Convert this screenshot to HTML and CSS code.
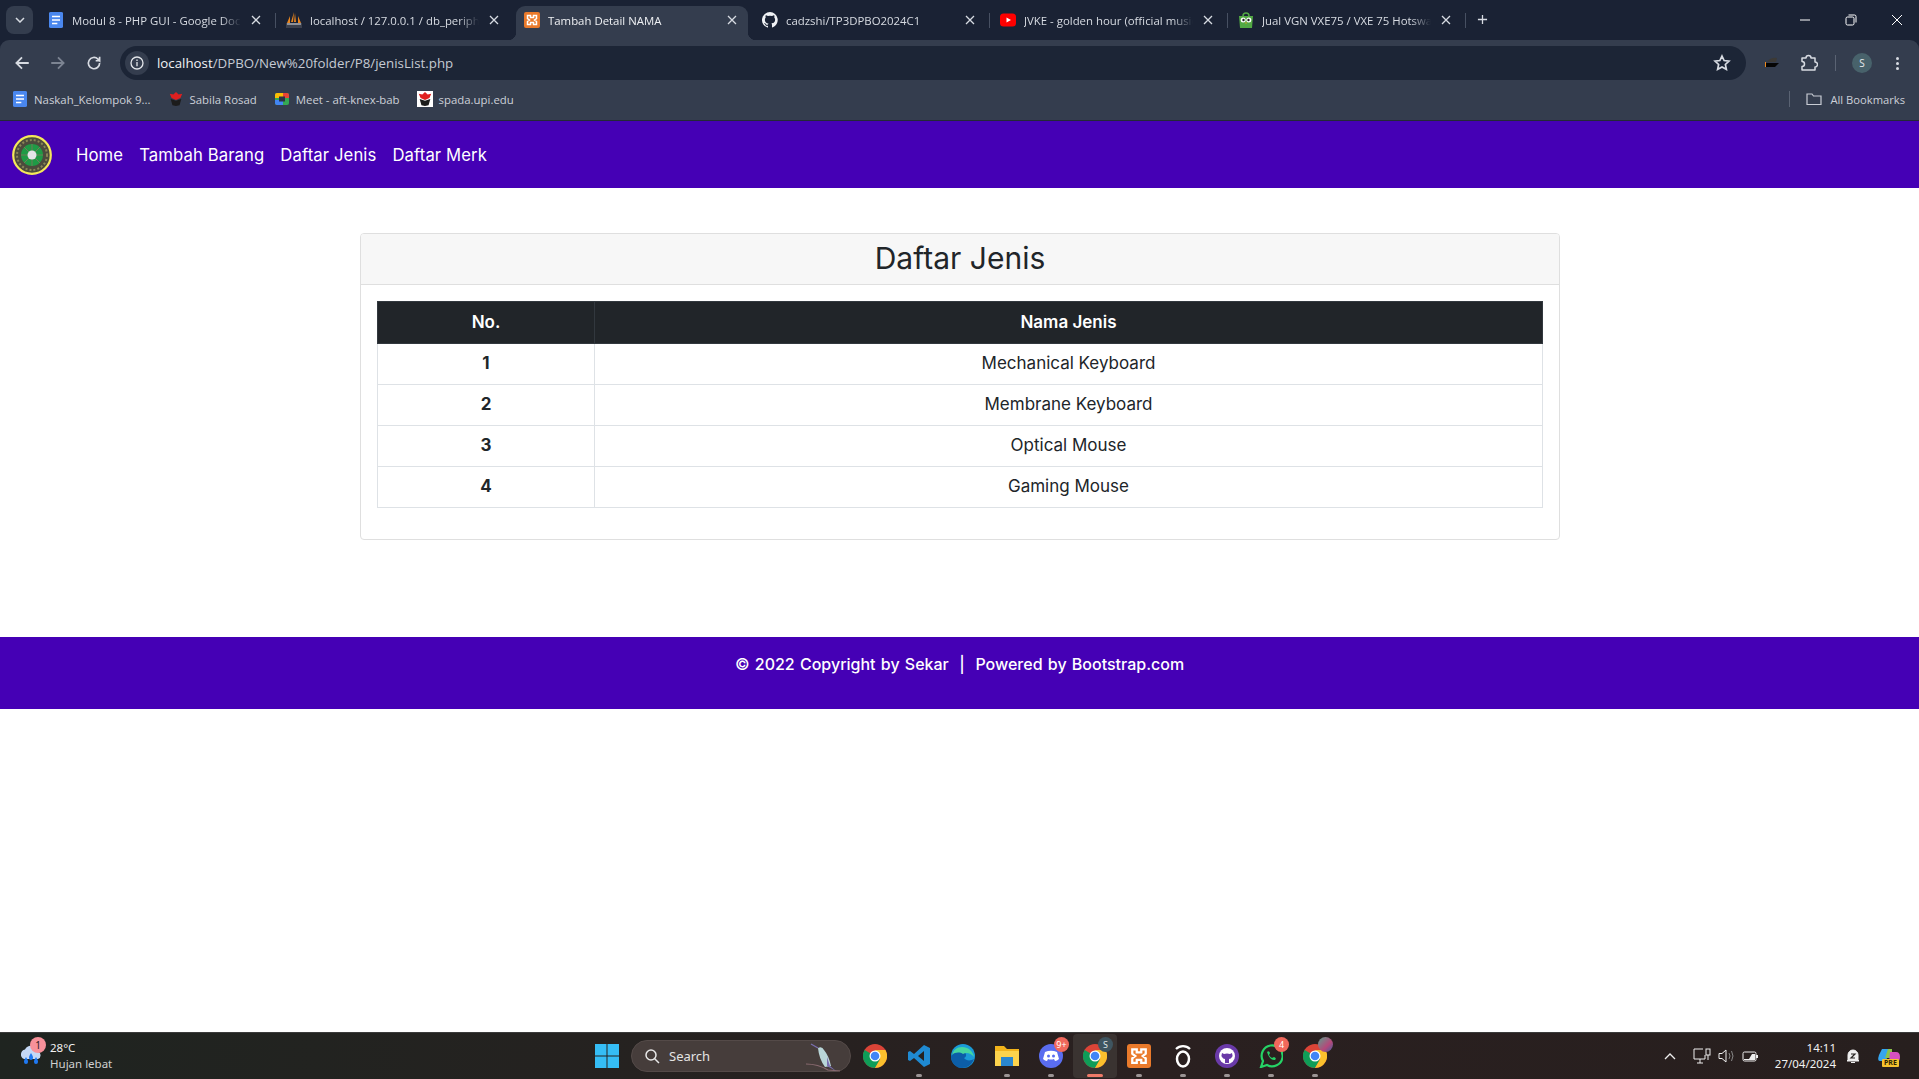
FILE: index.html
```html
<!DOCTYPE html>
<html lang="id">
<head>
<meta charset="utf-8">
<title>Tambah Detail NAMA</title>
<link rel="stylesheet" href="styles.css">
</head>
<body>
<svg class="defs" width="0" height="0" aria-hidden="true">
  <symbol id="x" viewBox="0 0 10 10"><path d="M1 1l8 8M9 1l-8 8" stroke="currentColor" stroke-width="1.3" fill="none"/></symbol>
  <symbol id="doc" viewBox="0 0 16 18"><rect width="16" height="18" rx="2" fill="#4a87ee"/><path d="M3.500 5h9M3.500 9h9M3.500 13h6" stroke="#fff" stroke-width="1.800"/></symbol>
  <symbol id="xampp" viewBox="0 0 16 16"><rect width="16" height="16" rx="2" fill="#ea7a2b"/><path d="M3.500 3.500h3v2h3v-2h3v3l-2 1.500 2 1.500v3h-3v-2h-3v2h-3v-3l2-1.500-2-1.500z" fill="none" stroke="#fff" stroke-width="1.500"/></symbol>
  <symbol id="chrome" viewBox="0 0 24 24"><circle cx="12" cy="12" r="12" fill="#db4437"/><path d="M12 12L1.600 6A12 12 0 0 0 12 24l5.200-9z" fill="#0f9d58"/><path d="M12 6h10.400A12 12 0 0 1 12 24l5.200-9z" fill="#fbc02d"/><circle cx="12" cy="12" r="5.500" fill="#fff"/><circle cx="12" cy="12" r="4.300" fill="#4285f4"/></symbol>
  <symbol id="emblem" viewBox="0 0 18 18"><path d="M9 1l3 3 4-1-2 5-5 2-5-2-2-5 4 1z" fill="#e02020"/><path d="M3 9l6 2 6-2-2 7-4 1-4-1z" fill="#1c1c1c"/></symbol>
</svg>

<header class="browser">
  <div class="tabstrip">
    <button class="tabmenu" aria-label="Search tabs"><svg width="10" height="6" viewBox="0 0 10 6"><path d="M1 1l4 4 4-4" stroke="#d7dbe2" stroke-width="1.500" fill="none"/></svg></button>
    <div class="tabs">
      <div class="tab sep"><svg class="fav" viewBox="0 0 16 18"><use href="#doc"/></svg><span class="tabtitle">Modul 8 - PHP GUI - Google Docs</span><svg class="tabx"><use href="#x"/></svg></div>
      <div class="tab"><svg class="fav" viewBox="0 0 16 16"><path d="M8 0L5 10h2zM9 1l-1 9h2zM4 4L1 11h3zM12 4l3 7h-3z" fill="#e8851f"/><path d="M0 11h16v5H0z" fill="#3a3f4c"/><path d="M1 12h14" stroke="#e3e3e3"/></svg><span class="tabtitle">localhost / 127.0.0.1 / db_periphery</span><svg class="tabx"><use href="#x"/></svg></div>
      <div class="tab active"><svg class="fav"><use href="#xampp"/></svg><span class="tabtitle">Tambah Detail NAMA</span><svg class="tabx"><use href="#x"/></svg></div>
      <div class="tab sep"><svg class="fav" viewBox="0 0 16 16"><path fill="#f0f2f5" fill-rule="evenodd" d="M8 0a8 8 0 0 0-2.500 15.600c.4.1.5-.2.500-.4v-1.400c-2.200.5-2.700-1-2.700-1-.4-.9-.9-1.200-.9-1.200-.7-.5.1-.5.1-.5.8.1 1.200.8 1.200.8.7 1.200 1.900.9 2.300.7.1-.5.3-.9.500-1.100-1.800-.2-3.600-.9-3.600-4 0-.9.3-1.600.8-2.100-.1-.2-.4-1 .1-2.100 0 0 .7-.2 2.200.8a7.600 7.600 0 0 1 4 0c1.500-1 2.200-.8 2.200-.8.4 1.100.2 1.900.1 2.100.5.6.8 1.300.8 2.100 0 3.100-1.900 3.700-3.700 3.900.3.3.6.800.6 1.500v2.200c0 .2.100.5.500.4A8 8 0 0 0 8 0z"/></svg><span class="tabtitle">cadzshi/TP3DPBO2024C1</span><svg class="tabx"><use href="#x"/></svg></div>
      <div class="tab sep"><svg class="fav" viewBox="0 0 16 16"><rect y="1.500" width="16" height="13" rx="3.500" fill="#f00"/><path d="M6.500 5.500L11 8l-4.500 2.500z" fill="#fff"/></svg><span class="tabtitle">JVKE - golden hour (official music video)</span><svg class="tabx"><use href="#x"/></svg></div>
      <div class="tab sep"><svg class="fav" viewBox="0 0 16 16"><path d="M1 4h14l-1 12H2z" fill="#52a844"/><path d="M5 4a3 3 0 0 1 6 0" fill="none" stroke="#52a844" stroke-width="1.500"/><circle cx="5.200" cy="8" r="2.500" fill="#fff"/><circle cx="10.800" cy="8" r="2.500" fill="#fff"/><circle cx="5.500" cy="8" r="1.200" fill="#222"/><circle cx="10.500" cy="8" r="1.200" fill="#222"/><path d="M7 10.500h2L8 12z" fill="#f4a31a"/></svg><span class="tabtitle">Jual VGN VXE75 / VXE 75 Hotswap</span><svg class="tabx"><use href="#x"/></svg></div>
      <svg class="newtab" viewBox="0 0 12 12"><path d="M6 1v10M1 6h10" stroke="#d7dbe2" stroke-width="1.400"/></svg>
    </div>
    <div class="winctl">
      <svg viewBox="0 0 12 12"><path d="M1 6h10" stroke="#fff"/></svg>
      <svg viewBox="0 0 12 12"><rect x="1" y="3" width="8" height="8" rx="1.500" fill="none" stroke="#fff"/><path d="M3.500 1H9.500a1.500 1.500 0 0 1 1.500 1.500V8.500" fill="none" stroke="#fff"/></svg>
      <svg viewBox="0 0 12 12"><path d="M1 1l10 10M11 1L1 11" stroke="#fff"/></svg>
    </div>
  </div>

  <div class="toolbar">
    <svg class="tool" viewBox="0 0 16 16"><path d="M14 8H3M8 3L3 8l5 5" fill="none" stroke="#d7dbe2" stroke-width="1.600"/></svg>
    <svg class="tool" viewBox="0 0 16 16"><path d="M2 8h11M8 3l5 5-5 5" fill="none" stroke="#7c8492" stroke-width="1.600"/></svg>
    <svg class="tool" viewBox="0 0 16 16"><path d="M13 8a5 5 0 1 1-1.500-3.500L13 6V2.500M13 6H9.500" fill="none" stroke="#d7dbe2" stroke-width="1.500"/></svg>
    <div class="omnibox">
      <span class="siteinfo"><svg width="14" height="14" viewBox="0 0 14 14"><circle cx="7" cy="7" r="6" fill="none" stroke="#e3e6ea" stroke-width="1.300"/><path d="M7 6v4.200M7 3.500v1.400" stroke="#e3e6ea" stroke-width="1.300"/></svg></span>
      <span class="url"><b>localhost</b>/DPBO/New%20folder/P8/jenisList.php</span>
      <svg class="star" viewBox="0 0 16 16"><path d="M8 1.800l1.900 4 4.300.5-3.200 3 .9 4.300L8 11.500l-3.900 2.100.9-4.300-3.200-3 4.300-.5z" fill="none" stroke="#d7dbe2" stroke-width="1.500"/></svg>
    </div>
    <svg class="ext1" viewBox="0 0 16 14"><path d="M3 6q4-5 10-4l-1 4z" fill="#3c3a36"/><path d="M1 6h1v5H1z" fill="#f08a1c"/><path d="M2 7h13l-4 4H2z" fill="#050505"/></svg>
    <svg class="ext2" viewBox="0 0 18 18"><path d="M2 4h4a2.500 2.500 0 0 1 5 0h4v4a2.500 2.500 0 0 1 0 5v3H2v-3.500a2.500 2.500 0 0 0 0-5z" fill="none" stroke="#d7dbe2" stroke-width="1.500" stroke-linejoin="round"/></svg>
    <span class="vsep"></span>
    <span class="avatar">S</span>
    <span class="dots"><i></i><i></i><i></i></span>
  </div>

  <nav class="bookmarks">
    <span class="bm"><svg class="bmicon" viewBox="0 0 16 18"><use href="#doc"/></svg>Naskah_Kelompok 9...</span>
    <span class="bm"><svg class="bmicon" viewBox="0 0 18 18"><use href="#emblem"/></svg>Sabila Rosad</span>
    <span class="bm"><svg class="bmicon" viewBox="0 0 16 16"><rect x="1" y="2" width="14" height="12" rx="2" fill="#34a853"/><path d="M1 4a2 2 0 0 1 2-2h6v5H1z" fill="#fbbc04"/><path d="M9 2h4a2 2 0 0 1 2 2v3H9z" fill="#ea4335"/><path d="M9 14H3a2 2 0 0 1-2-2V9h8z" fill="#4285f4"/><rect x="5" y="5.500" width="6" height="5" fill="#2b3344"/></svg>Meet - aft-knex-bab</span>
    <span class="bm"><svg class="bmicon" viewBox="0 0 18 18"><rect width="18" height="18" fill="#fff"/><use href="#emblem"/></svg>spada.upi.edu</span>
    <span class="vsep bmsep"></span>
    <span class="bm allbm"><svg class="bmicon" viewBox="0 0 16 14"><path d="M1 12.500V2h5l1.500 2h7.500v8.500z" fill="none" stroke="#c8ccd4" stroke-width="1.200"/></svg>All Bookmarks</span>
  </nav>
</header>

<div class="site">
  <nav class="topnav">
    <svg class="logo" viewBox="0 0 40 40"><circle cx="20" cy="20" r="18.800" fill="#4c4b3c" stroke="#f4e85a" stroke-width="2.200"/><circle cx="20" cy="20" r="15" fill="none" stroke="#8a8756" stroke-width="2" stroke-dasharray="2 2"/><circle cx="20" cy="20" r="11" fill="#1f9a45"/><path d="M20 9v22M9 20h22M12 12l16 16M28 12L12 28" stroke="#6f7d58" stroke-width="1"/><circle cx="20" cy="20" r="4.500" fill="#e4e4e8"/></svg>
    <a href="#">Home</a>
    <a href="#">Tambah Barang</a>
    <a href="#">Daftar Jenis</a>
    <a href="#">Daftar Merk</a>
  </nav>

  <main class="content">
    <section class="card">
      <h1 class="card-title">Daftar Jenis</h1>
      <div class="card-body">
        <table>
          <thead>
            <tr><th class="col-no">No.</th><th>Nama Jenis</th></tr>
          </thead>
          <tbody>
            <tr><th class="col-no">1</th><td>Mechanical Keyboard</td></tr>
            <tr><th class="col-no">2</th><td>Membrane Keyboard</td></tr>
            <tr><th class="col-no">3</th><td>Optical Mouse</td></tr>
            <tr><th class="col-no">4</th><td>Gaming Mouse</td></tr>
          </tbody>
        </table>
      </div>
    </section>
  </main>

  <footer class="sitefoot">© 2022 Copyright by Sekar &nbsp;|&nbsp; Powered by Bootstrap.com</footer>
</div>

<div class="taskbar">
  <div class="weather">
    <span class="wicon">
      <svg width="26" height="24" viewBox="0 0 26 24"><path d="M6 15a5 5 0 0 1 1-9.500 7 7 0 0 1 13 2 4 4 0 0 1 0 7.500z" fill="#c5d8f5"/><path d="M8 13c2 3 2 4 2 5a2 2 0 0 1-4 0c0-1 0-2 2-5zM18 13c2 3 2 4 2 5a2 2 0 0 1-4 0c0-1 0-2 2-5zM13 9c2 3 2 4 2 5a2 2 0 0 1-4 0c0-1 0-2 2-5z" fill="#1f78f0"/></svg>
      <span class="wbadge">1</span>
    </span>
    <span class="wtext"><span>28°C</span><span class="wsub">Hujan lebat</span></span>
  </div>
  <div class="apps">
    <svg class="win" viewBox="0 0 24 24"><path d="M0 0h11.500v11.500H0zM12.500 0H24v11.500H12.500zM0 12.500h11.500V24H0zM12.500 12.500H24V24H12.500z" fill="#35bdf5"/></svg>
    <div class="search">
      <svg width="16" height="16" viewBox="0 0 16 16"><circle cx="7" cy="7" r="5" fill="none" stroke="#e8e8e8" stroke-width="1.500"/><path d="M10.500 10.500L15 15" stroke="#e8e8e8" stroke-width="1.500"/></svg>
      <span class="searchtext">Search</span>
      <svg class="bird" width="38" height="30" viewBox="0 0 38 30"><path d="M2 21q12 0 22 6l12 1" fill="none" stroke="#8a6a70" stroke-width="1.200"/><path d="M14 5q4-2 6 2 5 6 7 16l-6 1q-6-8-7-19z" fill="#b9d6d8"/><path d="M23 14l3 9 6 5-9-5z" fill="#7a6fb0"/><path d="M14 5L7 1" stroke="#7a6fb0" stroke-width="1.200"/></svg>
    </div>
    <span class="app"><svg viewBox="0 0 24 24"><use href="#chrome"/></svg></span>
    <span class="app running"><svg viewBox="0 0 24 24"><path d="M17 1l6 3v16l-6 3-10-9-4 3-2-1v-8l2-1 4 3z" fill="#1f8ad2"/><path d="M17 7l-6 5 6 5z" fill="#25211f"/></svg></span>
    <span class="app"><svg viewBox="0 0 24 24"><circle cx="12" cy="12" r="12" fill="#1a9bd7"/><path d="M0 13C1 6 8 5 12 7c4 2 4 6 1 7 2 3 7 3 10 1-2 6-7 9-12 9C5 24 0 19 0 13z" fill="#0c5ea8"/><path d="M12 10c3-2 8-1 11 3-1-6-6-10-12-10-5 0-9 3-10 8 3-3 8-3 11-1z" fill="#45d6a0"/></svg></span>
    <span class="app running"><svg viewBox="0 0 24 24"><path d="M0 2h9l3 3h12v3H0z" fill="#f3b41b"/><path d="M0 7h24v15H0z" fill="#fcd34d"/><path d="M6 13h12v9H6z" fill="#2a87d0"/></svg></span>
    <span class="app running"><svg viewBox="0 0 24 24"><circle cx="12" cy="12" r="12" fill="#5a6df0"/><path d="M6 8q6-2.500 12 0l2 7q-2 2-4 2l-1-2q-3 1-6 0l-1 2q-2 0-4-2z" fill="#fff"/><circle cx="9.500" cy="12" r="1.500" fill="#5a6df0"/><circle cx="14.500" cy="12" r="1.500" fill="#5a6df0"/></svg><span class="appbadge red">9+</span></span>
    <span class="app current"><svg viewBox="0 0 24 24"><use href="#chrome"/></svg><span class="appbadge grey">S</span></span>
    <span class="app running"><svg viewBox="0 0 16 16"><use href="#xampp"/></svg></span>
    <span class="app running"><svg viewBox="0 0 24 24"><path d="M5 5a10 10 0 0 1 14 0" fill="none" stroke="#fff" stroke-width="2.200"/><ellipse cx="12" cy="15" rx="6" ry="7.500" fill="none" stroke="#fff" stroke-width="2.500"/></svg></span>
    <span class="app running"><svg viewBox="0 0 24 24"><circle cx="12" cy="12" r="12" fill="#6a3aa8"/><circle cx="12" cy="12" r="8" fill="#fff"/><path d="M7 9l2 1q3-1 6 0l2-1q1 3 0 4-1 2-3 2v4h-4v-4q-2 0-3-2-1-1 0-4z" fill="#6a3aa8"/></svg></span>
    <span class="app running"><svg viewBox="0 0 24 24"><path d="M2 23l2-6a10.500 10.500 0 1 1 4 4z" fill="none" stroke="#25d366" stroke-width="2.200"/><path d="M8 8q2-2 3 1l-1 2q1 2 3 3l2-1q3 1 1 3-5 1-8-8z" fill="#25d366"/></svg><span class="appbadge red">4</span></span>
    <span class="app running"><svg viewBox="0 0 24 24"><use href="#chrome"/></svg><span class="appbadge photo"></span></span>
  </div>
  <div class="tray">
    <svg class="chev" viewBox="0 0 12 8"><path d="M1 7l5-5 5 5" fill="none" stroke="#eee" stroke-width="1.300"/></svg>
    <svg class="net" viewBox="0 0 18 16"><path d="M10 1H1v10h11V7M4 15h6M7 11v4" fill="none" stroke="#eee"/><rect x="13" y="1" width="4" height="6" fill="none" stroke="#eee"/><path d="M15 7v5" stroke="#eee"/></svg>
    <svg class="vol" viewBox="0 0 18 16"><path d="M1 5.500h3L8 2v12l-4-3.500H1z" fill="none" stroke="#eee"/><path d="M11 5q2 3 0 6M13.500 3q3 5 0 10" fill="none" stroke="#888"/></svg>
    <svg class="bat" viewBox="0 0 18 14"><rect x="1" y="3" width="13" height="9" rx="1.500" fill="none" stroke="#eee"/><path d="M2 10h5l3-5h3v6H2z" fill="#eee"/><path d="M15 6v3" stroke="#eee" stroke-width="2"/></svg>
    <span class="clock"><span>14:11</span><span>27/04/2024</span></span>
    <svg class="bell" viewBox="0 0 16 16"><path d="M3 12V7a5 5 0 0 1 10 0v5l1 1H2zM6 14.500h4" fill="#eee" stroke="#eee"/><path d="M6 6h4l-4 4h4" fill="none" stroke="#25211f" stroke-width="1.200"/></svg>
    <span class="copilot"><svg width="24" height="18" viewBox="0 0 24 18"><path d="M5 2h8l-4 12H3Q0 14 2 8z" fill="#35a5ee"/><path d="M15 2h-4l-3 9h7z" fill="#8bc34a"/><path d="M13 5h6q4 0 4 5t-4 6h-7z" fill="#d650c0"/></svg><span class="pre">PRE</span></span>
  </div>
</div>
</body>
</html>
```

FILE: styles.css
```css
* { box-sizing: border-box; }
html, body { margin: 0; height: 100%; }
body {
  display: flex;
  flex-direction: column;
  height: 1079px;
  overflow: hidden;
  background: #fff;
  font-family: "Inter", "Noto Sans", sans-serif;
}
.defs { position: absolute; }

/* browser chrome */
.browser { background: #1a2234; color: #d7dbe2; font-family: "Open Sans", "Noto Sans", sans-serif; }
.tabstrip { display: flex; height: 40px; padding: 6px 0 0 6px; }
.tabmenu {
  flex: none; width: 27px; height: 28px; border: 0; border-radius: 8px;
  background: #343d4e; display: flex; align-items: center; justify-content: center; padding: 0;
}
.tabs { display: flex; flex: 1; margin-left: 7px; }
.tab {
  position: relative; flex: none; width: 232px; height: 34px; margin-right: 6px;
  display: flex; align-items: center; padding: 0 0 6px 8px; font-size: 11.400px;
}
.tab.sep::after {
  content: ""; position: absolute; right: -4px; top: 7px; width: 1px; height: 15px; background: #475062;
}
.tab.active { background: #343d4e; border-radius: 9px 9px 0 0; color: #eef0f3; }
.tab.active::before, .tab.active::after {
  content: ""; position: absolute; bottom: 0; width: 8px; height: 8px;
}
.tab.active::before { left: -8px; background: radial-gradient(circle at 0 0, transparent 8px, #343d4e 8.500px); }
.tab.active::after { right: -8px; background: radial-gradient(circle at 100% 0, transparent 8px, #343d4e 8.500px); }
.fav { flex: none; width: 16px; height: 16px; }
.tabtitle {
  flex: none; width: 169px; margin-left: 8px; margin-right: 3px; white-space: nowrap; overflow: hidden;
  -webkit-mask-image: linear-gradient(90deg, #000 88%, transparent);
  mask-image: linear-gradient(90deg, #000 88%, transparent);
}
.tabx { flex: none; width: 10px; height: 10px; margin-left: 7px; color: #d7dbe2; }
.newtab { flex: none; width: 11px; height: 11px; margin: 8px 0 0 9px; }
.winctl { display: flex; gap: 34px; padding: 8px 16px 0 0; }
.winctl svg { width: 12px; height: 12px; }

.toolbar {
  position: relative; display: flex; align-items: center; height: 46px; padding: 6px 0 6px 13px;
  background: #343d4e; border-radius: 9px 9px 0 0;
}
.tool { flex: none; width: 18px; height: 18px; margin-right: 18px; }
.omnibox {
  flex: none; width: 1626px; height: 34px; margin-left: -1px; margin-right: 18px; border-radius: 17px;
  background: #1c2536; display: flex; align-items: center; padding: 0 15px 0 5px;
}
.siteinfo {
  flex: none; width: 24px; height: 24px; border-radius: 50%; background: #343d4e;
  display: flex; align-items: center; justify-content: center;
}
.url { flex: 1; margin-left: 8px; font-size: 13.300px; color: #c5cad3; }
.url b { font-weight: 400; color: #f0f2f5; }
.star { flex: none; width: 18px; height: 18px; }
.ext1 { flex: none; width: 16px; height: 14px; }
.ext2 { flex: none; width: 18px; height: 18px; margin-left: 20px; }
.vsep { flex: none; width: 1px; height: 16px; background: #5a6373; }
.toolbar .vsep { margin-left: 17px; }
.avatar {
  flex: none; width: 20px; height: 20px; margin-left: 16px; border-radius: 50%;
  background: #48626b; color: #e6eaee; font-size: 10px; display: flex; align-items: center; justify-content: center;
}
.dots { flex: none; display: flex; flex-direction: column; gap: 2px; margin-left: 24px; }
.dots i { display: block; width: 3px; height: 3px; border-radius: 50%; background: #d7dbe2; }

.bookmarks {
  display: flex; align-items: center; height: 35px; padding: 0 0 8px 12px;
  background: #343d4e; border-bottom: 1px solid #232936; font-size: 11.400px; color: #ccd0d8;
}
.bm { display: flex; align-items: center; white-space: nowrap; margin-right: 17px; }
.bmicon { flex: none; width: 16px; height: 16px; margin-right: 6px; }
.bmsep { margin-left: auto; margin-right: 16px; }
.allbm { margin-right: 14px; font-size: 11.200px; }
.allbm .bmicon { margin-right: 8px; }

/* site */
.site { flex: none; }
.topnav {
  display: flex; align-items: center; height: 67px; padding-left: 12px; background: #4500b5;
}
.logo { flex: none; width: 40px; height: 40px; margin-right: 24px; }
.topnav a {
  color: #fff; text-decoration: none; font-size: 16.700px; margin-right: 16px; letter-spacing: .1px; white-space: nowrap;
}
.content { padding: 45px 359px 0 360px; height: 449px; }
.card {
  border: 1px solid #dfdfdf; border-radius: 4px; height: 307px; background: #fff; overflow: hidden;
}
.card-title {
  margin: 0; height: 51px; line-height: 49px; text-align: center; font-size: 30px; font-weight: 400;
  color: #212529; background: #f7f7f7; border-bottom: 1px solid #dfdfdf;
}
.card-body { padding: 16px 16px 0; }
table { width: 100%; border-collapse: collapse; table-layout: fixed; font-size: 17px; color: #212529; }
thead th { background: #212529; color: #fff; font-weight: 600; height: 42px; padding: 0 0 2px; border: 1px solid #32383e; font-size: 17px; }
tbody th, tbody td { height: 41px; padding: 0 0 2px; border: 1px solid #dee2e6; text-align: center; font-weight: 400; }
tbody th { font-weight: 700; }
.col-no { width: 217px; }
.sitefoot {
  height: 72px; padding-top: 15px; text-align: center; background: #4500b5; color: #fff;
  font-size: 16px; font-weight: 500; line-height: 24px; word-spacing: 1px;
}

/* taskbar */
.taskbar {
  margin-top: auto; flex: none; height: 47px; position: relative; display: flex; align-items: center;
  background: linear-gradient(90deg, #1f2420, #2a2020 60%, #271f1e); border-top: 1px solid #3b3b3b;
  font-family: "Noto Sans", sans-serif; color: #f2f2f2;
}
.weather { flex: none; width: 595px; display: flex; align-items: center; padding-left: 18px; }
.wicon { position: relative; width: 26px; height: 24px; flex: none; }
.wbadge {
  position: absolute; top: -7px; left: 12px; width: 16px; height: 16px; border-radius: 50%;
  background: #f8919a; color: #2a1a1a; font-size: 10px; line-height: 16px; text-align: center;
}
.wtext { display: flex; flex-direction: column; margin-left: 6px; font-size: 11.500px; line-height: 16px; }
.wsub { color: #d0d0d0; }
.apps { flex: none; display: flex; align-items: center; }
.win { flex: none; width: 24px; height: 24px; }
.search {
  flex: none; width: 220px; height: 32px; margin: 0 2px 0 12px; border-radius: 16px; background: #463d3b;
  border: 1px solid #544a48; display: flex; align-items: center; padding-left: 12px; position: relative;
}
.searchtext { margin-left: 9px; font-size: 13px; color: #e4e4e4; }
.bird { position: absolute; right: 8px; top: 2px; }
.app {
  position: relative; flex: none; width: 44px; height: 44px; display: flex; align-items: center; justify-content: center;
}
.app > svg { width: 24px; height: 24px; }
.app.running::after, .app.current::after {
  content: ""; position: absolute; bottom: 1px; left: 19px; width: 6px; height: 3px; border-radius: 2px; background: #9b9494;
}
.app.current { background: #3a3331; border-radius: 4px; }
.app.current::after { left: 14px; width: 16px; background: #ee7a68; }
.appbadge {
  position: absolute; top: 3px; right: 4px; width: 15px; height: 15px; border-radius: 50%;
  font-size: 9px; line-height: 15px; text-align: center;
}
.appbadge.red { background: #f0685c; color: #fff; }
.appbadge.grey { background: #3f5560; color: #dfe5e8; }
.appbadge.photo { background: linear-gradient(135deg, #5ba08d, #b5487a 60%, #3b5fa0); }
.tray { position: absolute; right: 0; top: 0; height: 46px; display: flex; align-items: center; }
.tray svg { flex: none; }
.chev { width: 12px; height: 8px; margin-right: 17px; }
.net { width: 18px; height: 16px; margin-right: 7px; }
.vol { width: 18px; height: 16px; margin-right: 6px; }
.bat { width: 18px; height: 14px; margin-right: 15px; }
.clock { display: flex; flex-direction: column; align-items: flex-end; font-size: 11.500px; line-height: 16px; }
.bell { width: 16px; height: 16px; margin: 0 16px 0 9px; }
.copilot { position: relative; width: 24px; margin-right: 18px; display: flex; flex-direction: column; align-items: center; }
.pre {
  position: absolute; top: 12px; left: 5px; background: #f5c22e; color: #2a2000; font-size: 7px; font-weight: 700; line-height: 8px; padding: 0 2px; border-radius: 1px;
}
```
